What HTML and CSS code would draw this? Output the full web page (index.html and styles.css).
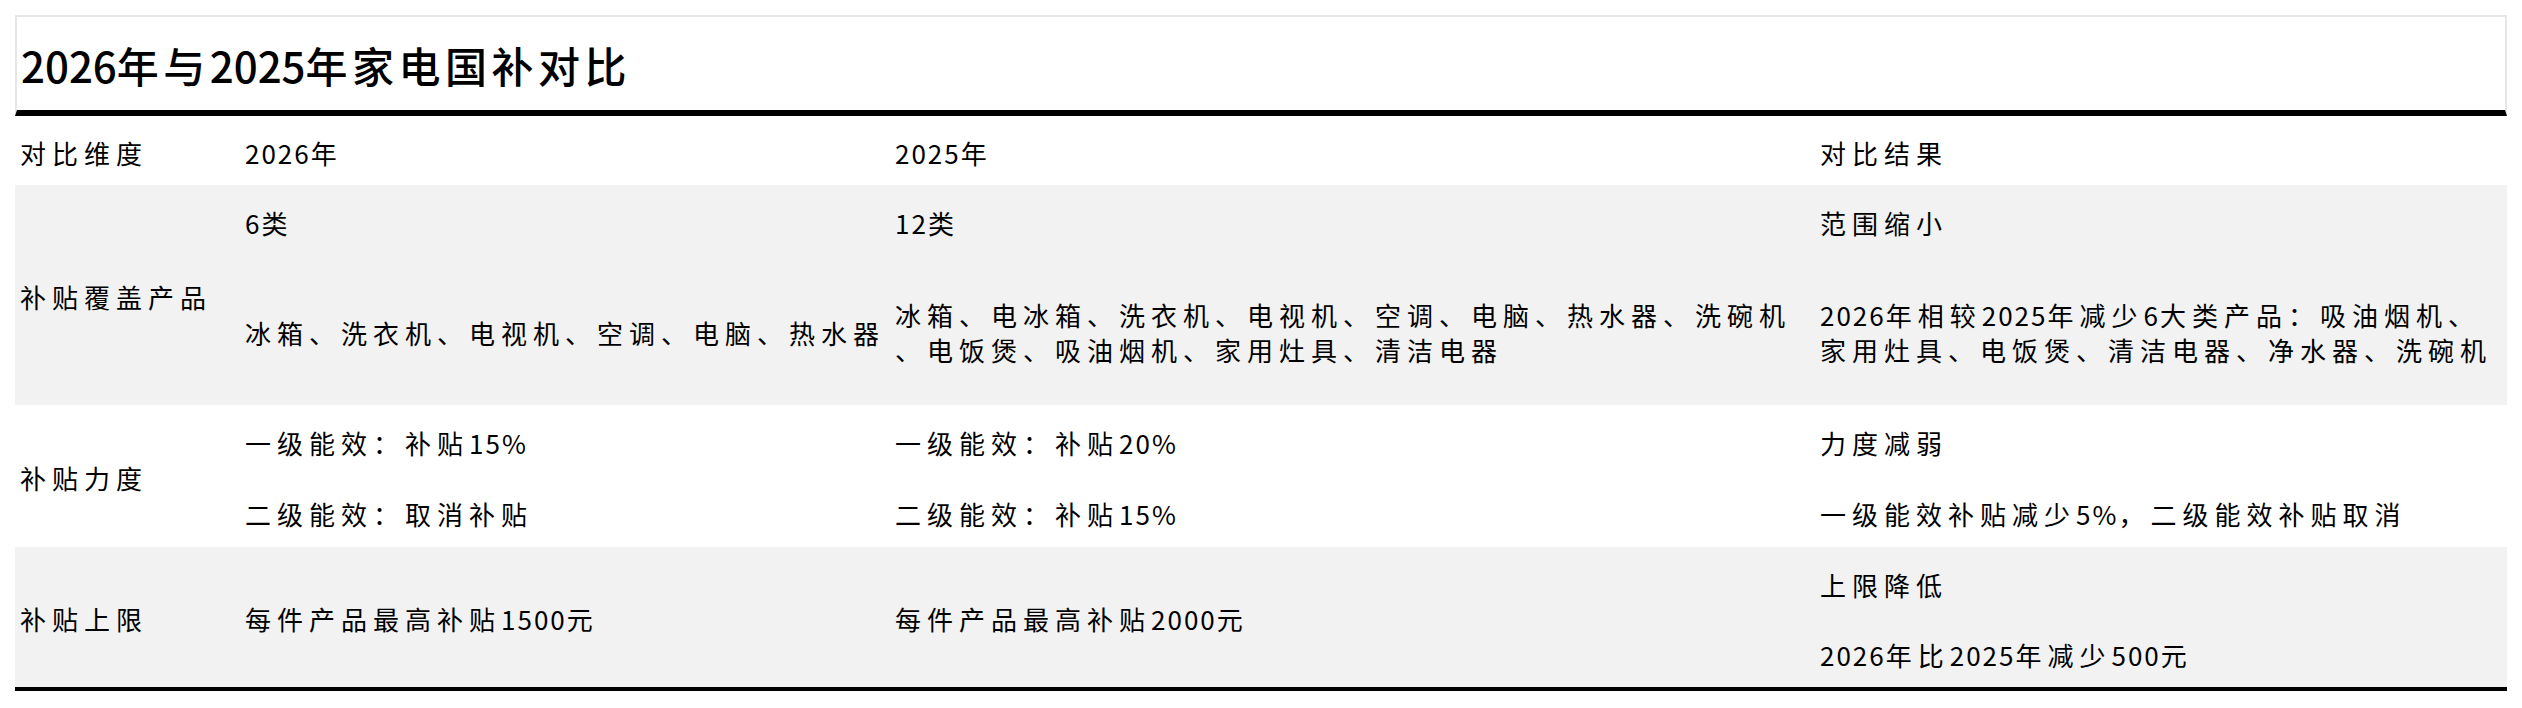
FILE: index.html
```html
<!DOCTYPE html>
<html lang="zh-CN">
<head>
<meta charset="utf-8">
<title>2026年与2025年家电国补对比</title>
<link rel="stylesheet" href="styles.css">
</head>
<body>
<div class="report">
  <div class="title-box">
    <h1 class="title"><span class="num">2026</span>年与<span class="num">2025</span>年家电国补对比</h1>
  </div>
  <table class="cmp">
    <colgroup>
      <col class="c-dim">
      <col class="c-new">
      <col class="c-old">
      <col class="c-res">
    </colgroup>
    <thead>
      <tr class="head">
        <th>对比维度</th>
        <th><span class="num">2026</span>年</th>
        <th><span class="num">2025</span>年</th>
        <th>对比结果</th>
      </tr>
    </thead>
    <tbody class="grp shaded">
      <tr class="sub">
        <td class="dim" rowspan="2">补贴覆盖产品</td>
        <td><span class="num">6</span>类</td>
        <td><span class="num">12</span>类</td>
        <td>范围缩小</td>
      </tr>
      <tr class="sub tall">
        <td>冰箱、洗衣机、电视机、空调、电脑、热水器</td>
        <td>冰箱、电冰箱、洗衣机、电视机、空调、电脑、热水器、洗碗机<br>、电饭煲、吸油烟机、家用灶具、清洁电器</td>
        <td><span class="num">2026</span>年相较<span class="num">2025</span>年减少<span class="num">6</span>大类产品：吸油烟机、<br>家用灶具、电饭煲、清洁电器、净水器、洗碗机</td>
      </tr>
    </tbody>
    <tbody class="grp">
      <tr class="sub">
        <td class="dim" rowspan="2">补贴力度</td>
        <td>一级能效：补贴<span class="num">15%</span></td>
        <td>一级能效：补贴<span class="num">20%</span></td>
        <td>力度减弱</td>
      </tr>
      <tr class="sub">
        <td>二级能效：取消补贴</td>
        <td>二级能效：补贴<span class="num">15%</span></td>
        <td>一级能效补贴减少<span class="num">5%</span>，二级能效补贴取消</td>
      </tr>
    </tbody>
    <tbody class="grp shaded last">
      <tr class="sub">
        <td class="dim" rowspan="2">补贴上限</td>
        <td rowspan="2">每件产品最高补贴<span class="num">1500</span>元</td>
        <td rowspan="2">每件产品最高补贴<span class="num">2000</span>元</td>
        <td>上限降低</td>
      </tr>
      <tr class="sub">
        <td><span class="num">2026</span>年比<span class="num">2025</span>年减少<span class="num">500</span>元</td>
      </tr>
    </tbody>
  </table>
</div>
</body>
</html>
```

FILE: styles.css
```css
html, body {
  margin: 0;
  padding: 0;
  background: #ffffff;
}

body {
  font-family: "Noto Sans CJK SC", "Noto Sans", sans-serif;
  color: #000000;
}

.report {
  margin: 15px 15px 0 15px;
  width: 2492px;
}

.title-box {
  border: 2px solid #e6e6e6;
  border-bottom: 6px solid #000000;
  height: 93px;
  box-sizing: content-box;
}

.title {
  margin: 0;
  padding: 2px 0 0 4px;
  font-size: 42px;
  font-weight: 500;
  line-height: 91px;
  letter-spacing: 4.5px;
  white-space: nowrap;
}

.title .num {
  letter-spacing: 0;
}

.cmp {
  width: 2492px;
  border-collapse: collapse;
  table-layout: fixed;
  font-size: 26px;
  letter-spacing: 6px;
  border-bottom: 4px solid #000000;
}

.cmp .num {
  letter-spacing: 2px;
}

.c-dim { width: 225px; }
.c-new { width: 650px; }
.c-old { width: 925px; }
.c-res { width: 692px; }

.cmp th,
.cmp td {
  padding: 3px 0 0 5px;
  text-align: left;
  vertical-align: middle;
  font-weight: 400;
  line-height: 35px;
  white-space: nowrap;
}

.head {
  height: 69px;
}

.sub {
  height: 71px;
}

.sub.tall {
  height: 149px;
}

.shaded td {
  background: #f2f2f2;
}
```
